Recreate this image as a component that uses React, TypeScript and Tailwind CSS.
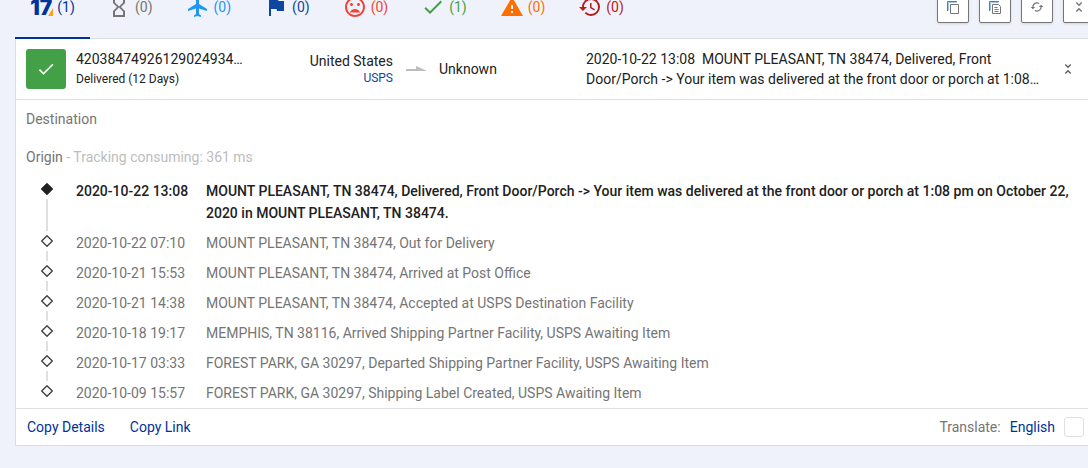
import type { ComponentType } from "react";
import {
  MdCached,
  MdCheck,
  MdFlag,
  MdFlight,
  MdHistory,
  MdHourglassEmpty,
  MdMoodBad,
  MdWarning,
} from "react-icons/md";

type IconProps = { className?: string };

function BrandIcon() {
  return (
    <span className="flex items-end pt-0.5" aria-hidden="true">
      <span className="font-['Inter',sans-serif] text-[21px] leading-6 font-black">17</span>
      <svg viewBox="0 0 5 8" className="mb-1 -ml-1 h-2 w-[5px]">
        <path d="M0 8 5 0v8z" fill="#ff9f1c" />
      </svg>
    </span>
  );
}

function CopyIcon({ className }: IconProps) {
  return (
    <svg viewBox="0 0 14 14" className={className} fill="none" stroke="currentColor" aria-hidden="true">
      <path d="M2.500 10.500V2.500h8" stroke="#9cc3ea" />
      <path d="M1.500 11V1.500H11" />
      <path d="M4.500 4.500h8v9h-8z" fill="#ffffff" />
    </svg>
  );
}

function CopyDetailsIcon({ className }: IconProps) {
  return (
    <svg viewBox="0 0 14 14" className={className} fill="none" stroke="currentColor" aria-hidden="true">
      <path d="M2.500 10.500V2.500h8" stroke="#9cc3ea" />
      <path d="M1.500 11V1.500H11" />
      <path d="M4.500 4.500h6l2 2v7h-8z" fill="#ffffff" />
      <path d="M6.500 7.500h3M6.500 9.500h4M6.500 11.500h4" />
    </svg>
  );
}

function CollapseIcon({ className }: IconProps) {
  return (
    <svg viewBox="0 0 14 14" className={className} fill="none" stroke="currentColor" strokeWidth="1.4" aria-hidden="true">
      <path d="M4.300 2.500 7 5.200 9.700 2.500M4.300 11.500 7 8.800l2.700 2.700" />
    </svg>
  );
}

type Tab = { label: string; count: number; color: string; Icon: ComponentType<IconProps> };

const tabs: Tab[] = [
  { label: "Not found", count: 0, color: "text-[#757575]", Icon: MdHourglassEmpty },
  { label: "In transit", count: 0, color: "text-[#2196f3]", Icon: MdFlight },
  { label: "Pick up", count: 0, color: "text-[#0d47a1]", Icon: MdFlag },
  { label: "Undelivered", count: 0, color: "text-[#f44336]", Icon: MdMoodBad },
  { label: "Delivered", count: 1, color: "text-[#43a047]", Icon: MdCheck },
  { label: "Alert", count: 0, color: "text-[#ff6f00]", Icon: MdWarning },
  { label: "Expired", count: 0, color: "text-[#b71c1c]", Icon: MdHistory },
];

const tools: { label: string; Icon: ComponentType<IconProps> }[] = [
  { label: "Copy numbers", Icon: CopyIcon },
  { label: "Copy all details", Icon: CopyDetailsIcon },
  { label: "Refresh", Icon: MdCached },
  { label: "Collapse all", Icon: CollapseIcon },
];

const events = [
  {
    time: "2020-10-22 13:08",
    text: "MOUNT PLEASANT, TN 38474, Delivered, Front Door/Porch -> Your item was delivered at the front door or porch at 1:08 pm on October 22, 2020 in MOUNT PLEASANT, TN 38474.",
  },
  { time: "2020-10-22 07:10", text: "MOUNT PLEASANT, TN 38474, Out for Delivery" },
  { time: "2020-10-21 15:53", text: "MOUNT PLEASANT, TN 38474, Arrived at Post Office" },
  { time: "2020-10-21 14:38", text: "MOUNT PLEASANT, TN 38474, Accepted at USPS Destination Facility" },
  { time: "2020-10-18 19:17", text: "MEMPHIS, TN 38116, Arrived Shipping Partner Facility, USPS Awaiting Item" },
  { time: "2020-10-17 03:33", text: "FOREST PARK, GA 30297, Departed Shipping Partner Facility, USPS Awaiting Item" },
  { time: "2020-10-09 15:57", text: "FOREST PARK, GA 30297, Shipping Label Created, USPS Awaiting Item" },
];

function TopBar() {
  return (
    <header className="-mt-6 flex h-[62px] items-stretch justify-between">
      <nav className="flex gap-px" aria-label="Status">
        <button className="-mb-px flex w-[75px] items-center justify-center gap-1 border-b-2 border-[#003399] text-[#003399]">
          <BrandIcon />
          <span>(1)</span>
        </button>
        {tabs.map(({ label, count, color, Icon }) => (
          <button key={label} aria-label={label} className={`flex items-center gap-1 px-4 ${color}`}>
            <Icon className="size-6" />
            <span>({count})</span>
          </button>
        ))}
      </nav>
      <div className="flex items-center gap-2.5">
        {tools.map(({ label, Icon }) => (
          <button
            key={label}
            aria-label={label}
            className="flex size-8 items-center justify-center rounded-xs border border-[#757575] bg-white text-[#757575] shadow-sm"
          >
            <Icon className="size-3.5" />
          </button>
        ))}
      </div>
    </header>
  );
}

function Summary() {
  return (
    <div className="flex h-[61px] items-center border-b border-[#e0e0e0] px-2.5">
      <div className="flex size-10 shrink-0 items-center justify-center rounded-[3px] bg-[#43a047] text-white">
        <MdCheck className="size-5" />
      </div>
      <div className="ml-2.5 w-[200px] shrink-0 leading-5">
        <p>42038474926129024934…</p>
        <p className="text-xs leading-5">Delivered (12 Days)</p>
      </div>
      <div className="flex flex-1 items-center">
        <div className="w-[117px] shrink-0 text-right">
          <p className="leading-[18px]">United States</p>
          <a href="#usps" className="block text-xs leading-4 text-[#0d47a1]">
            USPS
          </a>
        </div>
        <svg viewBox="0 0 20 6" className="mx-3 h-1.5 w-[22px] shrink-0 px-px" fill="#bdbdbd" aria-hidden="true">
          <path d="M0 3h10V0l10 4.500V5H0z" />
        </svg>
        <p>Unknown</p>
      </div>
      <p className="w-[459px] shrink-0 leading-5 whitespace-pre-wrap">
        {"2020-10-22 13:08  MOUNT PLEASANT, TN 38474, Delivered, Front Door/Porch -> Your item was delivered at the front door or porch at 1:08…"}
      </p>
      <button aria-label="Collapse" className="mr-[9px] ml-4 text-[#616161]">
        <CollapseIcon className="size-3.5" />
      </button>
    </div>
  );
}

function Marker({ first, last }: { first: boolean; last: boolean }) {
  return (
    <div className="flex w-[42px] shrink-0 flex-col items-center" aria-hidden="true">
      <div className={first ? "h-[3px]" : "h-[3px] w-0.5 bg-[#e0e0e0]"} />
      <svg viewBox="0 0 20 20" className="size-5 shrink-0">
        <path
          d="M10 4.700 15.300 10 10 15.300 4.700 10z"
          fill={first ? "#212121" : "#ffffff"}
          stroke={first ? "#212121" : "#424242"}
          strokeWidth="1.4"
          strokeLinejoin="round"
        />
      </svg>
      {!last && <div className="w-0.5 flex-1 bg-[#e0e0e0]" />}
    </div>
  );
}

function Details() {
  return (
    <section className="text-[#757575]">
      <h2 className="flex h-[38px] items-center px-2.5">Destination</h2>
      <h2 className="flex h-[38px] items-center px-2.5 whitespace-pre">
        Origin<span className="text-[#bdbdbd]"> - Tracking consuming: 361 ms</span>
      </h2>
      <ol>
        {events.map(({ time, text }, i) => (
          <li key={time} className={`flex px-2.5 leading-[22px] ${i === 0 ? "font-medium text-[#212121]" : ""}`}>
            <Marker first={i === 0} last={i === events.length - 1} />
            <time className="ml-2 w-[130px] shrink-0 py-1">{time}</time>
            <p className="py-1">{text}</p>
          </li>
        ))}
      </ol>
    </section>
  );
}

function Footer() {
  return (
    <footer className="flex h-[37px] items-center justify-between border-t border-[#e0e0e0] pr-2.5 pl-[11px]">
      <div className="flex gap-[25px]">
        <button className="text-[#003399]">Copy Details</button>
        <button className="text-[#003399]">Copy Link</button>
      </div>
      <div className="flex items-center gap-[9px]">
        <label htmlFor="translate" className="text-[#757575]">
          Translate:
        </label>
        <button className="text-[#003399]">English</button>
        <input
          id="translate"
          type="checkbox"
          className="size-5 appearance-none rounded-[3px] border border-[#e0e0e0] bg-white"
        />
      </div>
    </footer>
  );
}

export default function App() {
  return (
    <div className="min-h-screen overflow-hidden bg-[#eff2fa] font-['Roboto',sans-serif] text-sm text-[#212121]">
      <main className="-mr-[7px] ml-[15px]">
        <TopBar />
        <article className="border border-[#dadde3] bg-white">
          <Summary />
          <Details />
          <Footer />
        </article>
      </main>
    </div>
  );
}
